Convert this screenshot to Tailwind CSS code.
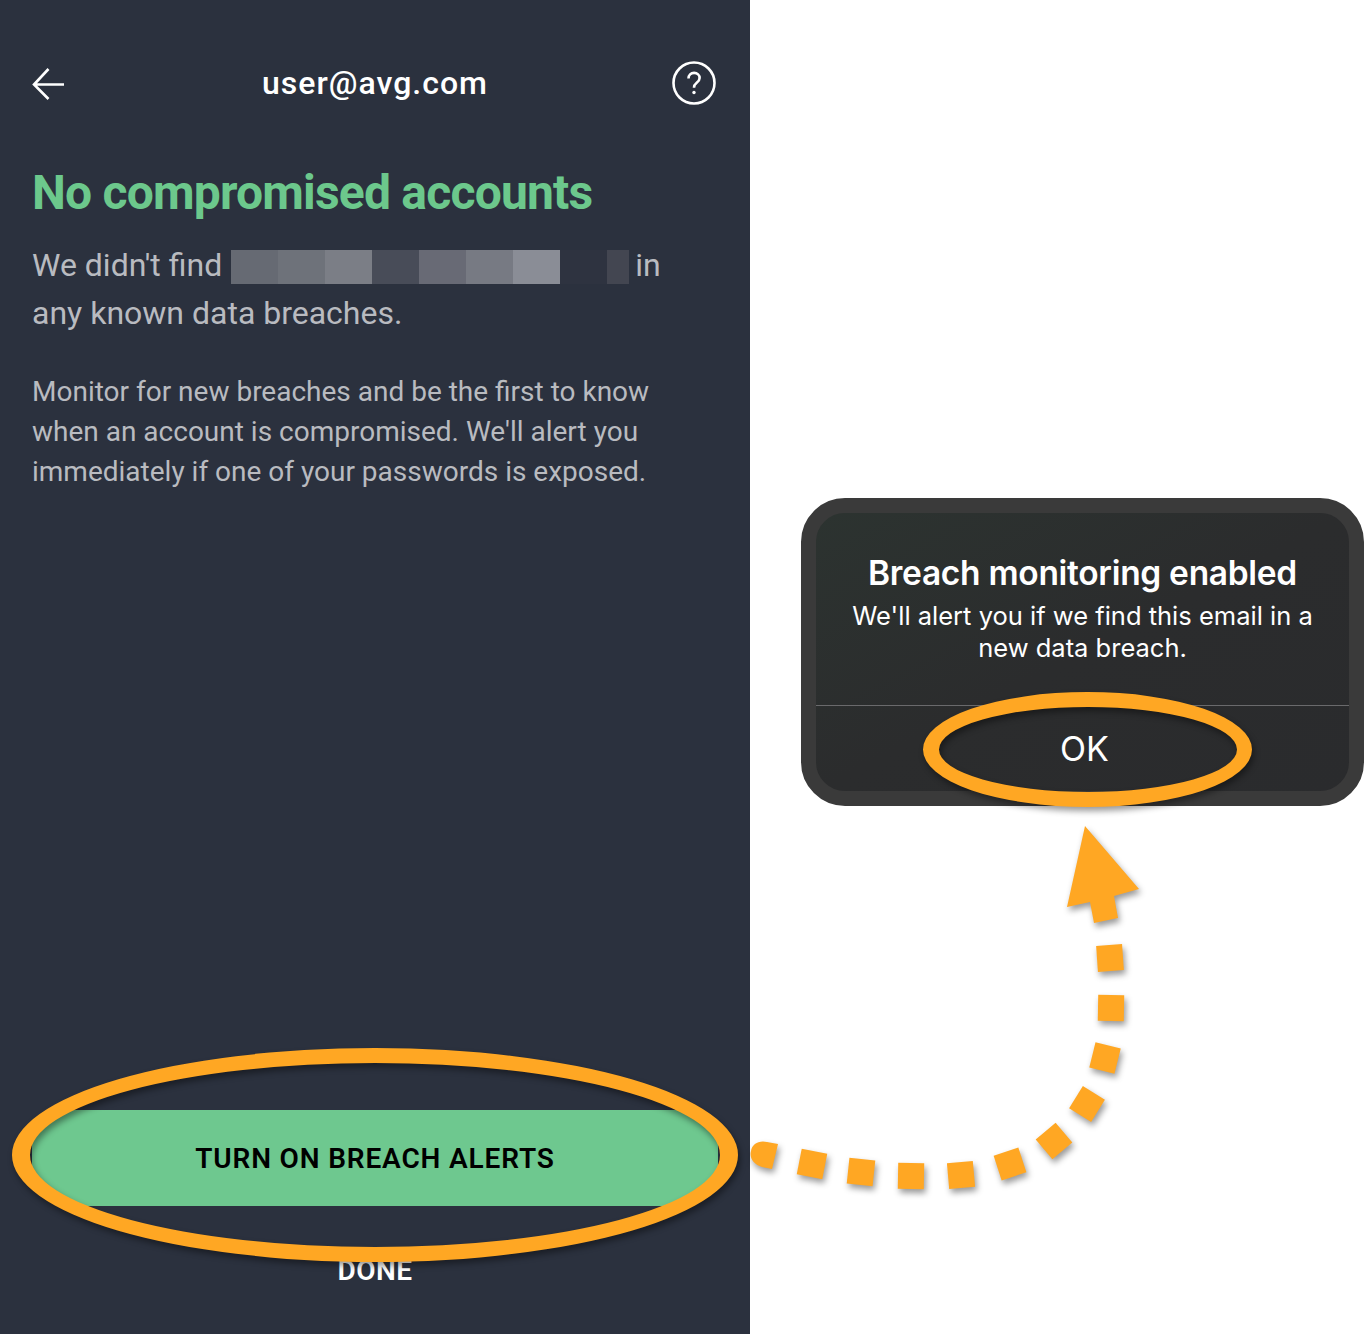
<!DOCTYPE html>
<html>
<head>
<meta charset="utf-8">
<script src="https://cdn.jsdelivr.net/npm/@tailwindcss/browser@4"></script>
</head>
<body class="bg-white">
<div class="relative flex h-[1334px] w-[1370px] overflow-hidden bg-white font-['Roboto',sans-serif]">
  <div class="flex h-full w-[750px] shrink-0 flex-col bg-[#2b313e] px-8">
    <div class="mt-[60px] grid h-[48px] grid-cols-[1fr_auto_1fr] items-center">
      <svg class="h-[36px] w-[32px]" viewBox="0 0 32 36" fill="none" stroke="#fff" stroke-width="2.6"><path d="M32 18.500H2M16.500 3L2 18.500L16.500 33"/></svg>
      <div class="-mt-[3px] text-[32px] font-medium leading-[48px] tracking-[1px] text-white">user@avg.com</div>
      <svg class="-mt-[2px] mr-[2px] h-[44px] w-[44px] justify-self-end" viewBox="0 0 44 44" fill="none" stroke="#fff" stroke-width="2.6"><circle cx="22" cy="22" r="20.5"/><path d="M16.500 17.500c0-3.400 2.400-5.600 5.600-5.600 3.200 0 5.500 2.200 5.500 5 0 2.300-1.200 3.500-2.900 4.800-1.800 1.400-2.700 2.400-2.700 5"/><circle cx="22" cy="31.500" r="1.700" fill="#fff" stroke="none"/></svg>
    </div>
    <h1 class="mt-[57px] text-[48px] font-bold leading-[56px] tracking-[-0.8px] text-[#6cc88c]">No compromised accounts</h1>
    <div class="mt-[20px] w-[660px] text-[32px] leading-[48px] text-[#b9bbc0]">
      <div class="flex items-center"><span>We didn't find</span><span class="ml-[9px] mr-[6px] mt-[4px] flex h-[34px]"><i class="block w-[47px] bg-[#666a73]"></i><i class="block w-[47px] bg-[#6e727a]"></i><i class="block w-[47px] bg-[#7b7e86]"></i><i class="block w-[47px] bg-[#484c58]"></i><i class="block w-[47px] bg-[#686a75]"></i><i class="block w-[47px] bg-[#777a83]"></i><i class="block w-[47px] bg-[#8a8d96]"></i><i class="block w-[47px] bg-[#2e3340]"></i><i class="block w-[22px] bg-[#434651]"></i></span><span>in</span></div>
      <div>any known data breaches.</div>
    </div>
    <p class="mt-[35px] w-[680px] text-[28px] leading-[40px] text-[#b9bbc0]">Monitor for new breaches and be the first to know when an account is compromised. We'll alert you immediately if one of your passwords is exposed.</p>
    <button class="mt-auto flex h-[96px] w-[686px] shrink-0 items-center justify-center bg-[#6ec88f] pt-[2px] text-[28px] font-semibold tracking-[0.85px] text-black [clip-path:ellipse(354px_100px_at_343px_45px)]">TURN ON BREACH ALERTS</button>
    <div class="mt-[45px] mb-[43px] text-center text-[28px] font-semibold leading-[40px] tracking-[0.5px] text-white">DONE</div>
  </div>
  <div class="flex-1 pl-[51px] pt-[498px]">
    <div class="h-[308px] w-[563px] rounded-[44px] border-[15px] border-[#3a3a3a] bg-gradient-to-br from-[#2c3330] via-[#2b2c2d] to-[#2a2b2d] font-['Inter',sans-serif] text-white">
      <div class="flex h-[193px] flex-col items-center border-b border-[#6a6a6c] pt-[36px] text-center">
        <div class="text-[33.500px] font-semibold leading-[48px] tracking-[-0.3px]">Breach monitoring enabled</div>
        <div class="mt-[3px] w-[500px] text-[25.500px] leading-[32px]">We'll alert you if we find this email in a new data breach.</div>
      </div>
      <div class="flex h-[85px] items-center justify-center pl-[4px] text-[34px] font-normal">OK</div>
    </div>
  </div>
  <svg class="pointer-events-none absolute left-0 top-0 drop-shadow-[2px_4px_3px_rgba(0,0,0,0.4)]" width="1370" height="1334" viewBox="0 0 1370 1334" fill="#ffa723">
    <path fill-rule="evenodd" d="M12 1155a363 107 0 1 0 726 0a363 107 0 1 0 -726 0ZM30 1155a345 92 0 1 1 690 0a345 92 0 1 1 -690 0Z"/>
    <path fill-rule="evenodd" d="M923 749.500a164.500 57.500 0 1 0 329 0a164.500 57.500 0 1 0 -329 0ZM939 749.500a149 42.500 0 1 1 298 0a149 42.500 0 1 1 -298 0Z"/>
    <path d="M1085 826L1139 889L1114 896L1118 918L1094 923L1090 902L1067 907Z"/>
    <path d="M778 1144L772 1169L762 1167C754 1165 749 1158 751 1151C752 1144 759 1140 767 1142Z"/>
    <rect x="799" y="1151" width="26" height="26" transform="rotate(11 812 1164)"/>
    <rect x="848" y="1159" width="26" height="26" transform="rotate(6 861 1172)"/>
    <rect x="898" y="1163" width="26" height="26" transform="rotate(1 911 1176)"/>
    <rect x="948" y="1162" width="26" height="26" transform="rotate(-5 961 1175)"/>
    <rect x="997" y="1151" width="26" height="26" transform="rotate(-18 1010 1164)"/>
    <rect x="1041" y="1128" width="26" height="26" transform="rotate(-40 1054 1141)"/>
    <rect x="1074" y="1091" width="26" height="26" transform="rotate(-58 1087 1104)"/>
    <rect x="1092" y="1045" width="26" height="26" transform="rotate(-76 1105 1058)"/>
    <rect x="1098" y="995" width="26" height="26" transform="rotate(1 1111 1008)"/>
    <rect x="1097" y="945" width="26" height="26" transform="rotate(-4 1110 958)"/>
  </svg>
</div>
</body>
</html>
